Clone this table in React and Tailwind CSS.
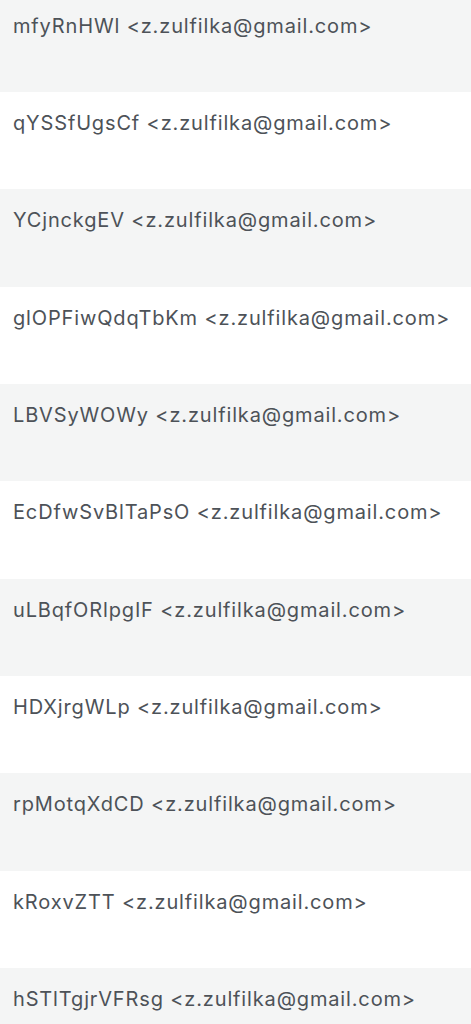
export default function App() {
  const names = [
    "mfyRnHWl",
    "qYSSfUgsCf",
    "YCjnckgEV",
    "glOPFiwQdqTbKm",
    "LBVSyWOWy",
    "EcDfwSvBlTaPsO",
    "uLBqfORlpgIF",
    "HDXjrgWLp",
    "rpMotqXdCD",
    "kRoxvZTT",
    "hSTlTgjrVFRsg",
  ];
  return (
    <div className="w-[471px] h-[1024px] overflow-hidden bg-white" style={{ fontFamily: 'Inter, "Liberation Sans", sans-serif' }}>
      <div className="flex flex-col -mt-[5.33px]">
        {names.map((n, i) => (
          <div
            key={n}
            className={`h-[97.33px] shrink-0 px-[13px] pt-[17px] ${i % 2 === 0 ? "bg-[#f4f5f5]" : "bg-white"}`}
          >
            <div className="text-[20px] leading-[28px] tracking-[0.85px] whitespace-nowrap text-[#4d5258]">
              {n} &lt;z.zulfilka@gmail.com&gt;
            </div>
          </div>
        ))}
      </div>
    </div>
  );
}
